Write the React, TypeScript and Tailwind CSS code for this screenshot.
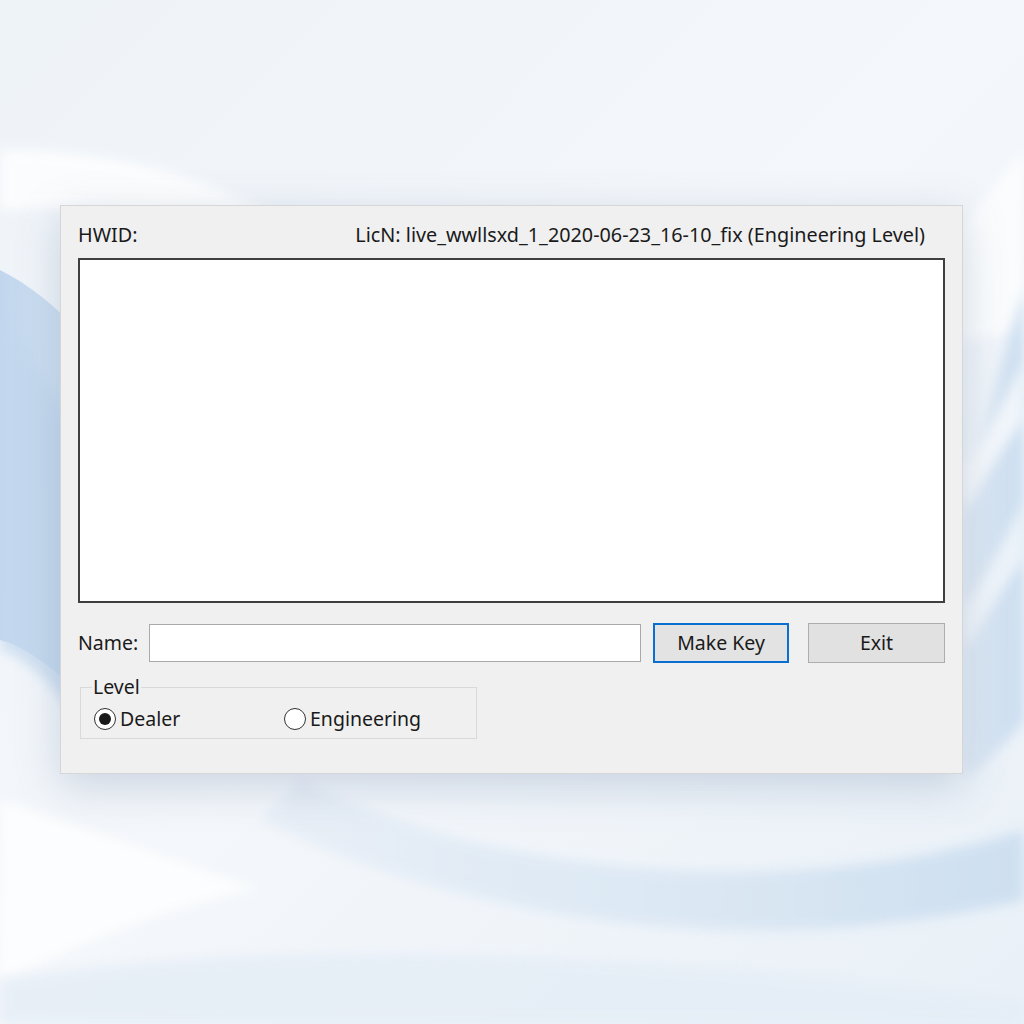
import { useState } from "react";

const FONT = "font-['Noto_Sans','Open_Sans',sans-serif]";

function Backdrop() {
  // soft wallpaper swooshes behind the dialog
  return (
    <svg
      className="absolute inset-0 h-full w-full"
      viewBox="0 0 1024 1024"
      preserveAspectRatio="none"
    >
      <defs>
        <linearGradient id="base" x1="0" y1="0" x2="1" y2="1">
          <stop offset="0" stopColor="#eef3f8" />
          <stop offset="0.5" stopColor="#f4f7fb" />
          <stop offset="1" stopColor="#e9f0f7" />
        </linearGradient>
        <linearGradient id="leftBlue" x1="0" y1="0" x2="1" y2="0">
          <stop offset="0" stopColor="#bcd3ec" />
          <stop offset="1" stopColor="#e3edf7" />
        </linearGradient>
        <linearGradient id="bottomBand" x1="0" y1="0" x2="1" y2="0">
          <stop offset="0" stopColor="#e8eff7" />
          <stop offset="0.6" stopColor="#d9e6f3" />
          <stop offset="1" stopColor="#cbdef0" />
        </linearGradient>
        <linearGradient id="rightBlue" x1="0" y1="0" x2="1" y2="0">
          <stop offset="0" stopColor="#dfe9f5" />
          <stop offset="1" stopColor="#c4d9ee" />
        </linearGradient>
        <filter id="soft">
          <feGaussianBlur stdDeviation="6" />
        </filter>
      </defs>
      <rect width="1024" height="1024" fill="url(#base)" />
      <path
        d="M0 150 C120 150 220 180 300 230 L300 260 C200 220 100 200 0 210 Z"
        fill="#ffffff"
        opacity="0.8"
        filter="url(#soft)"
      />
      <path
        d="M0 270 C60 300 110 360 140 430 L140 760 C90 700 40 650 0 640 Z"
        fill="url(#leftBlue)"
        opacity="0.9"
      />
      <path
        d="M0 320 C40 360 70 420 90 480 L90 740 C60 690 30 660 0 650 Z"
        fill="#c3d8ee"
        opacity="0.7"
        filter="url(#soft)"
      />
      <path
        d="M1024 150 C960 230 900 300 860 360 L1024 330 Z"
        fill="#ffffff"
        opacity="0.7"
        filter="url(#soft)"
      />
      <path
        d="M1024 290 C1000 360 980 440 965 520 L965 780 C990 760 1010 740 1024 720 Z"
        fill="url(#rightBlue)"
        opacity="0.85"
        filter="url(#soft)"
      />
      <path
        d="M962 470 C990 430 1010 390 1024 360 L1024 420 C1000 450 985 480 966 510 Z"
        fill="#ffffff"
        opacity="0.7"
        filter="url(#soft)"
      />
      <path
        d="M962 610 C990 570 1010 530 1024 500 L1024 560 C1000 590 985 620 966 650 Z"
        fill="#ffffff"
        opacity="0.6"
        filter="url(#soft)"
      />
      <path
        d="M300 780 C500 880 800 900 1024 830 L1024 900 C780 960 480 930 260 820 Z"
        fill="url(#bottomBand)"
        opacity="0.9"
        filter="url(#soft)"
      />
      <path
        d="M0 800 C120 840 200 870 260 890 C180 900 90 940 0 980 Z"
        fill="#ffffff"
        opacity="0.8"
        filter="url(#soft)"
      />
      <path
        d="M0 980 C300 930 700 960 1024 1000 L1024 1024 L0 1024 Z"
        fill="#e4edf6"
        opacity="0.8"
        filter="url(#soft)"
      />
    </svg>
  );
}

function Radio({
  checked,
  label,
  onSelect,
}: {
  checked: boolean;
  label: string;
  onSelect: () => void;
}) {
  return (
    <button
      type="button"
      onClick={onSelect}
      className="flex items-center gap-[4px] text-[19.5px] leading-[24px] text-[#1a1a1a]"
    >
      <span className="flex h-[22px] w-[22px] items-center justify-center rounded-full border-[1.5px] border-[#333] bg-white">
        {checked && <span className="h-[12px] w-[12px] rounded-full bg-[#1a1a1a]" />}
      </span>
      {label}
    </button>
  );
}

export default function App() {
  const [level, setLevel] = useState<"dealer" | "engineering">("dealer");

  return (
    <div className={`relative h-[1024px] w-[1024px] overflow-hidden ${FONT}`}>
      <Backdrop />

      <div className="relative pl-[60px] pt-[205px]">
        <div className="flex h-[569px] w-[903px] flex-col border border-[#d6d6d6] bg-[#f0f0f0] px-[17px] pt-[17px] shadow-[0_12px_40px_rgba(80,110,150,0.25)]">
          <div className="flex items-center justify-between pr-[20px] text-[19.8px] leading-[24px] text-[#1a1a1a]">
            <span>HWID:</span>
            <span>LicN: live_wwllsxd_1_2020-06-23_16-10_fix (Engineering Level)</span>
          </div>

          <textarea className="mt-[11px] h-[345px] w-[867px] resize-none border-2 border-[#3f3f3f] bg-white outline-none" />

          <div className="mt-[20px] flex items-center">
            <span className="w-[71px] text-[19.5px] leading-[24px] text-[#1a1a1a]">Name:</span>
            <input className="h-[38px] w-[492px] border-[1.5px] border-[#a9a9a9] bg-white px-2 outline-none" />
            <button
              type="button"
              className="ml-[12px] h-[40px] w-[136px] border-2 border-[#0a6fd0] bg-[#e3e3e3] text-[19.5px] text-[#1a1a1a]"
            >
              Make Key
            </button>
            <button
              type="button"
              className="ml-[19px] h-[40px] w-[137px] border-[1.5px] border-[#adadad] bg-[#e1e1e1] text-[19.5px] text-[#1a1a1a]"
            >
              Exit
            </button>
          </div>

          <fieldset className="ml-[2px] mt-[12px] h-[64px] w-[397px] border border-[#d9d9d9] px-[13px]">
            <legend className="-ml-[2px] px-[1px] text-[19.5px] leading-[24px] text-[#1a1a1a]">Level</legend>
            <div className="mt-[8px] flex">
              <div className="w-[190px]">
                <Radio checked={level === "dealer"} label="Dealer" onSelect={() => setLevel("dealer")} />
              </div>
              <Radio
                checked={level === "engineering"}
                label="Engineering"
                onSelect={() => setLevel("engineering")}
              />
            </div>
          </fieldset>
        </div>
      </div>
    </div>
  );
}
